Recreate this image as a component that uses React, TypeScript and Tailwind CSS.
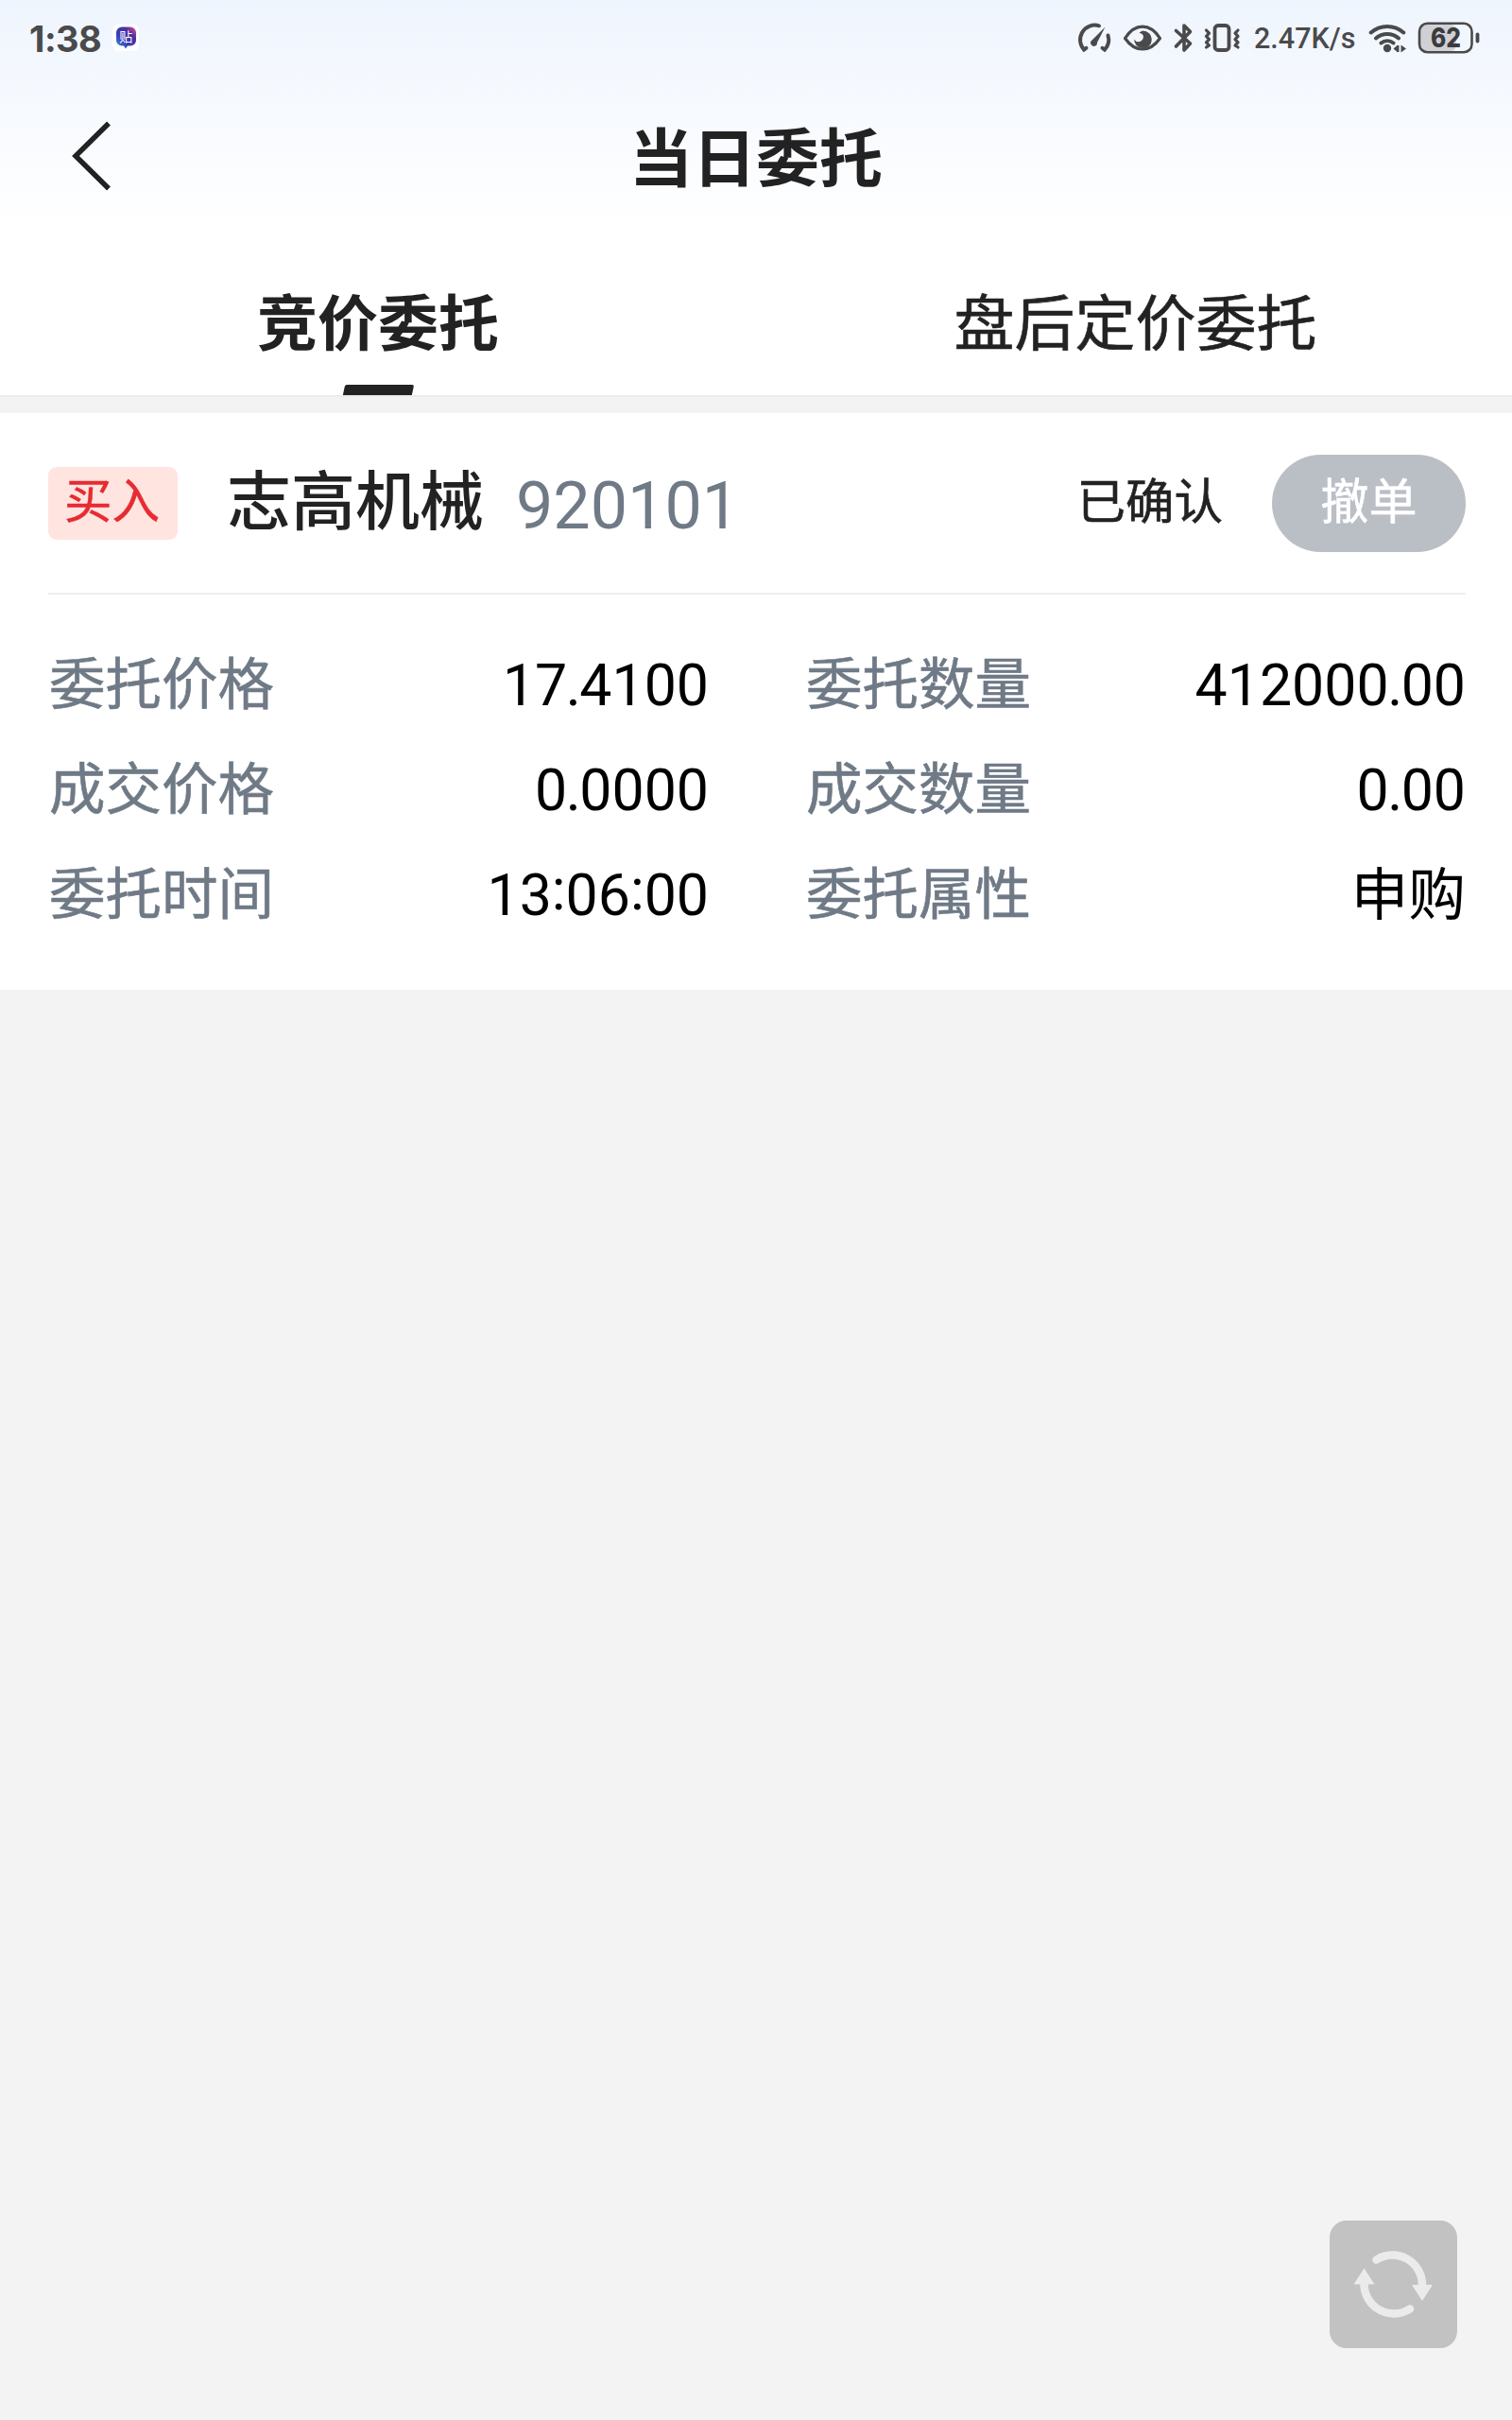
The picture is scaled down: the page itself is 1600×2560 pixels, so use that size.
const CJK = "font-['Noto_Sans_CJK_SC',sans-serif]";
const NUM = "font-['Roboto','Noto_Sans_CJK_SC',sans-serif]";

function StatusBar() {
  return (
    <div className="flex h-20 items-center justify-between pl-[31px] pr-[34px] text-[#4a4a4c]">
      <div className="flex items-center gap-3">
        <span className="mt-px font-['Inter',sans-serif] text-[38px] font-bold leading-none tracking-[-0.5px]">1:38</span>
        <svg width="28" height="28" viewBox="0 0 28 28">
          <defs>
            <linearGradient id="chat" x1="0" y1="1" x2="1" y2="0">
              <stop offset="0" stopColor="#29a8f5" />
              <stop offset="0.35" stopColor="#3a3fb5" />
              <stop offset="0.7" stopColor="#4a2fa0" />
              <stop offset="1" stopColor="#f0508c" />
            </linearGradient>
          </defs>
          <rect width="28" height="28" rx="6" fill="#fff" />
          <path d="M10 2.500h9a6 6 0 0 1 6 6v8a6 6 0 0 1-6 6h-3l-2 3-2-3h-2a6 6 0 0 1-6-6v-8a6 6 0 0 1 6-6z" fill="url(#chat)" />
          <text x="14.3" y="18" textAnchor="middle" fontSize="14" fill="#fff" fontFamily="Noto Sans CJK SC">贴</text>
        </svg>
      </div>
      <svg width="180" height="40" viewBox="1139 20 180 40" fill="none" stroke="#4a4a4c" strokeWidth="4" strokeLinecap="round" strokeLinejoin="round" className="ml-auto">
        <path d="M1147 52.500A15.500 15.500 0 0 1 1163 27.300M1172.500 37.500A15.500 15.500 0 0 1 1169 52.500M1147 52.800l2.500-2M1169 52.800l-2.500-2" />
        <path d="M1155.500 42.500L1169.500 28.500l-8.500 16.500a3.500 3.500 0 1 1-5.500-2.500z" fill="#4a4a4c" stroke="none" />
        <path d="M1190.500 40.500q8-12.300 18.500-12.300t18.500 12.300q-8 11.500-18.500 11.500t-18.500-11.500z" strokeWidth="3.200" />
        <path d="M1209.500 32.500a9.300 9.300 0 1 1-9.300 9q2 3.500 5.800 2.500a5 5 0 0 0 3.500-7q-1.500-2-4-2.300 2-1.900 4-2.200z" fill="#4a4a4c" stroke="none" />
        <path d="M1244.500 32.500l15 13.500-6.500 7v-26l6.500 6.500-15 15.500" strokeWidth="3.600" />
        <rect x="1285.500" y="27" width="15" height="26" rx="3.500" strokeWidth="3.800" />
        <path d="M1276.500 32l3 3.200-3 3.200 3 3.200-3 3.200 3 3.200-3 2M1310 32l-3 3.200 3 3.200-3 3.200 3 3.200-3 3.200 3 2" strokeWidth="3.200" />
      </svg>
      <span className="ml-[8px] mt-[2px] w-[107px] whitespace-nowrap font-['Roboto',sans-serif] text-[30.5px] font-medium leading-none">2.47K/s</span>
      <svg width="118" height="40" viewBox="1448 20 118 40" fill="none" stroke="#4a4a4c" strokeLinecap="round" className="ml-[14px]">
        <path d="M1450.700 34.500a26 26 0 0 1 34.600 0M1456 40.500a18 18 0 0 1 24 0M1461.500 45.500a10.500 10.500 0 0 1 13 0" strokeWidth="4" />
        <circle cx="1468" cy="51" r="4.200" fill="#4a4a4c" stroke="none" />
        <path d="M1474.500 51.500l4.500-4v8zM1488 51.500l-5.500-4v8zM1479 48h1.500v7h-1.500z" fill="#4a4a4c" stroke="none" />
        <rect x="1503" y="26" width="38" height="28" rx="6" fill="#cfd1d6" stroke="none" />
        <rect x="1502" y="24.800" width="55.500" height="30.400" rx="8.500" strokeWidth="2.600" />
        <path d="M1563.500 36.500v7" strokeWidth="3.800" />
        <text x="1530" y="50" textAnchor="middle" fill="#3c3c3e" stroke="none" fontSize="28" fontWeight="800" fontFamily="Inter" textLength="32" lengthAdjust="spacingAndGlyphs">62</text>
      </svg>
    </div>
  );
}

// Colons are centred on the digit height and points are set tight.
function Figure({ value }: { value: string }) {
  return (
    <>
      {value.split(/([:.])/).map((part, i) =>
        part === ":" ? (
          <span key={i} className="relative -top-[6px]">:</span>
        ) : part === "." ? (
          <span key={i} className="-mx-[1.5px]">.</span>
        ) : (
          <span key={i}>{part}</span>
        ),
      )}
    </>
  );
}

function Field({ label, value }: { label: string; value: string }) {
  return (
    <div className="flex h-[111px] items-center justify-between">
      <span className={`${CJK} mb-[9px] ml-px text-[59.5px] leading-none text-[#6f7a86] [-webkit-text-stroke:0.6px_#6f7a86]`}>{label}</span>
      <span className={`${NUM} mt-[4px] text-[60.8px] leading-none text-black`}>
        <Figure value={value} />
      </span>
    </div>
  );
}

export default function App() {
  return (
    <div className={`flex h-[2560px] w-[1600px] flex-col bg-[#f3f3f3] ${CJK}`}>
      <div className="h-[420px] border-b-2 border-[#ececec] bg-white bg-linear-to-b from-[#eff5fe] to-white to-[240px]">
        <StatusBar />
        <header className="grid h-[172px] grid-cols-[200px_1fr_200px] items-center">
          <svg width="46" height="76" viewBox="0 0 46 76" fill="none" stroke="#222" strokeWidth="5.500" className="-mt-[3px] ml-[74px]">
            <path d="M41 3.500L6 38l35 34.500" />
          </svg>
          <h1 className="-mt-[8px] text-center text-[67px] font-bold leading-none text-[#222]">当日委托</h1>
        </header>
        <nav className="grid h-[168px] grid-cols-2 text-center text-[64px] leading-none text-[#222]">
          <div className="flex flex-col items-center justify-between">
            <span className="mt-[53px] font-bold">竞价委托</span>
            <span className="mb-[2px] ml-px h-[11px] w-[73px] -skew-x-12 rounded-t-[2px] bg-[#222]" />
          </div>
          <span className="ml-[3px] mt-[53px] [-webkit-text-stroke:0.6px_#222]">盘后定价委托</span>
        </nav>
      </div>
      <section className="mt-[17px] h-[610px] bg-white pl-[51px] pr-[49px]">
        <div className="flex h-[192px] items-center border-b-2 border-[#efefef]">
          <div className="flex h-[77px] w-[137px] items-center justify-center rounded-[9px] bg-[#ffe4e0] pb-[11px] pr-[2px] text-[50.500px] leading-none text-[#e62b32] [-webkit-text-stroke:0.5px_#e62b32]">买入</div>
          <span className="mb-[12px] ml-[52px] text-[68px] font-medium leading-none text-[#222]">志高机械</span>
          <span className={`${NUM} ml-[34px] mt-[6px] text-[70px] leading-none text-[#6f7a86]`}>920101</span>
          <span className="mb-[10px] ml-auto text-[51.5px] leading-none text-[#222] [-webkit-text-stroke:0.6px_#222]">已确认</span>
          <button className="ml-[52px] flex h-[103px] w-[205px] items-center justify-center rounded-full bg-[#babfc6] pb-[10px] text-[51px] leading-none text-white [-webkit-text-stroke:0.6px_#fff]">撤单</button>
        </div>
        <div className="grid grid-cols-2 gap-x-[102px] pt-[40px]">
          <Field label="委托价格" value="17.4100" />
          <Field label="委托数量" value="412000.00" />
          <Field label="成交价格" value="0.0000" />
          <Field label="成交数量" value="0.00" />
          <Field label="委托时间" value="13:06:00" />
          <Field label="委托属性" value="申购" />
        </div>
      </section>
      <button className="mb-[76px] ml-auto mr-[58px] mt-auto flex h-[135px] w-[135px] items-center justify-center rounded-[18px] bg-[#c2c2c2]">
        <svg width="135" height="135" viewBox="0 0 135 135" fill="none" stroke="#ebebeb" strokeWidth="8.500" strokeLinecap="round">
          <path d="M49.500 41.500A31.500 31.500 0 0 1 98 69" />
          <path d="M85 93.500A31.500 31.500 0 0 1 36.500 66" />
          <path d="M87 68h22l-11 17zM25.500 67.500h22l-11-17z" fill="#ebebeb" stroke="none" />
        </svg>
      </button>
    </div>
  );
}
